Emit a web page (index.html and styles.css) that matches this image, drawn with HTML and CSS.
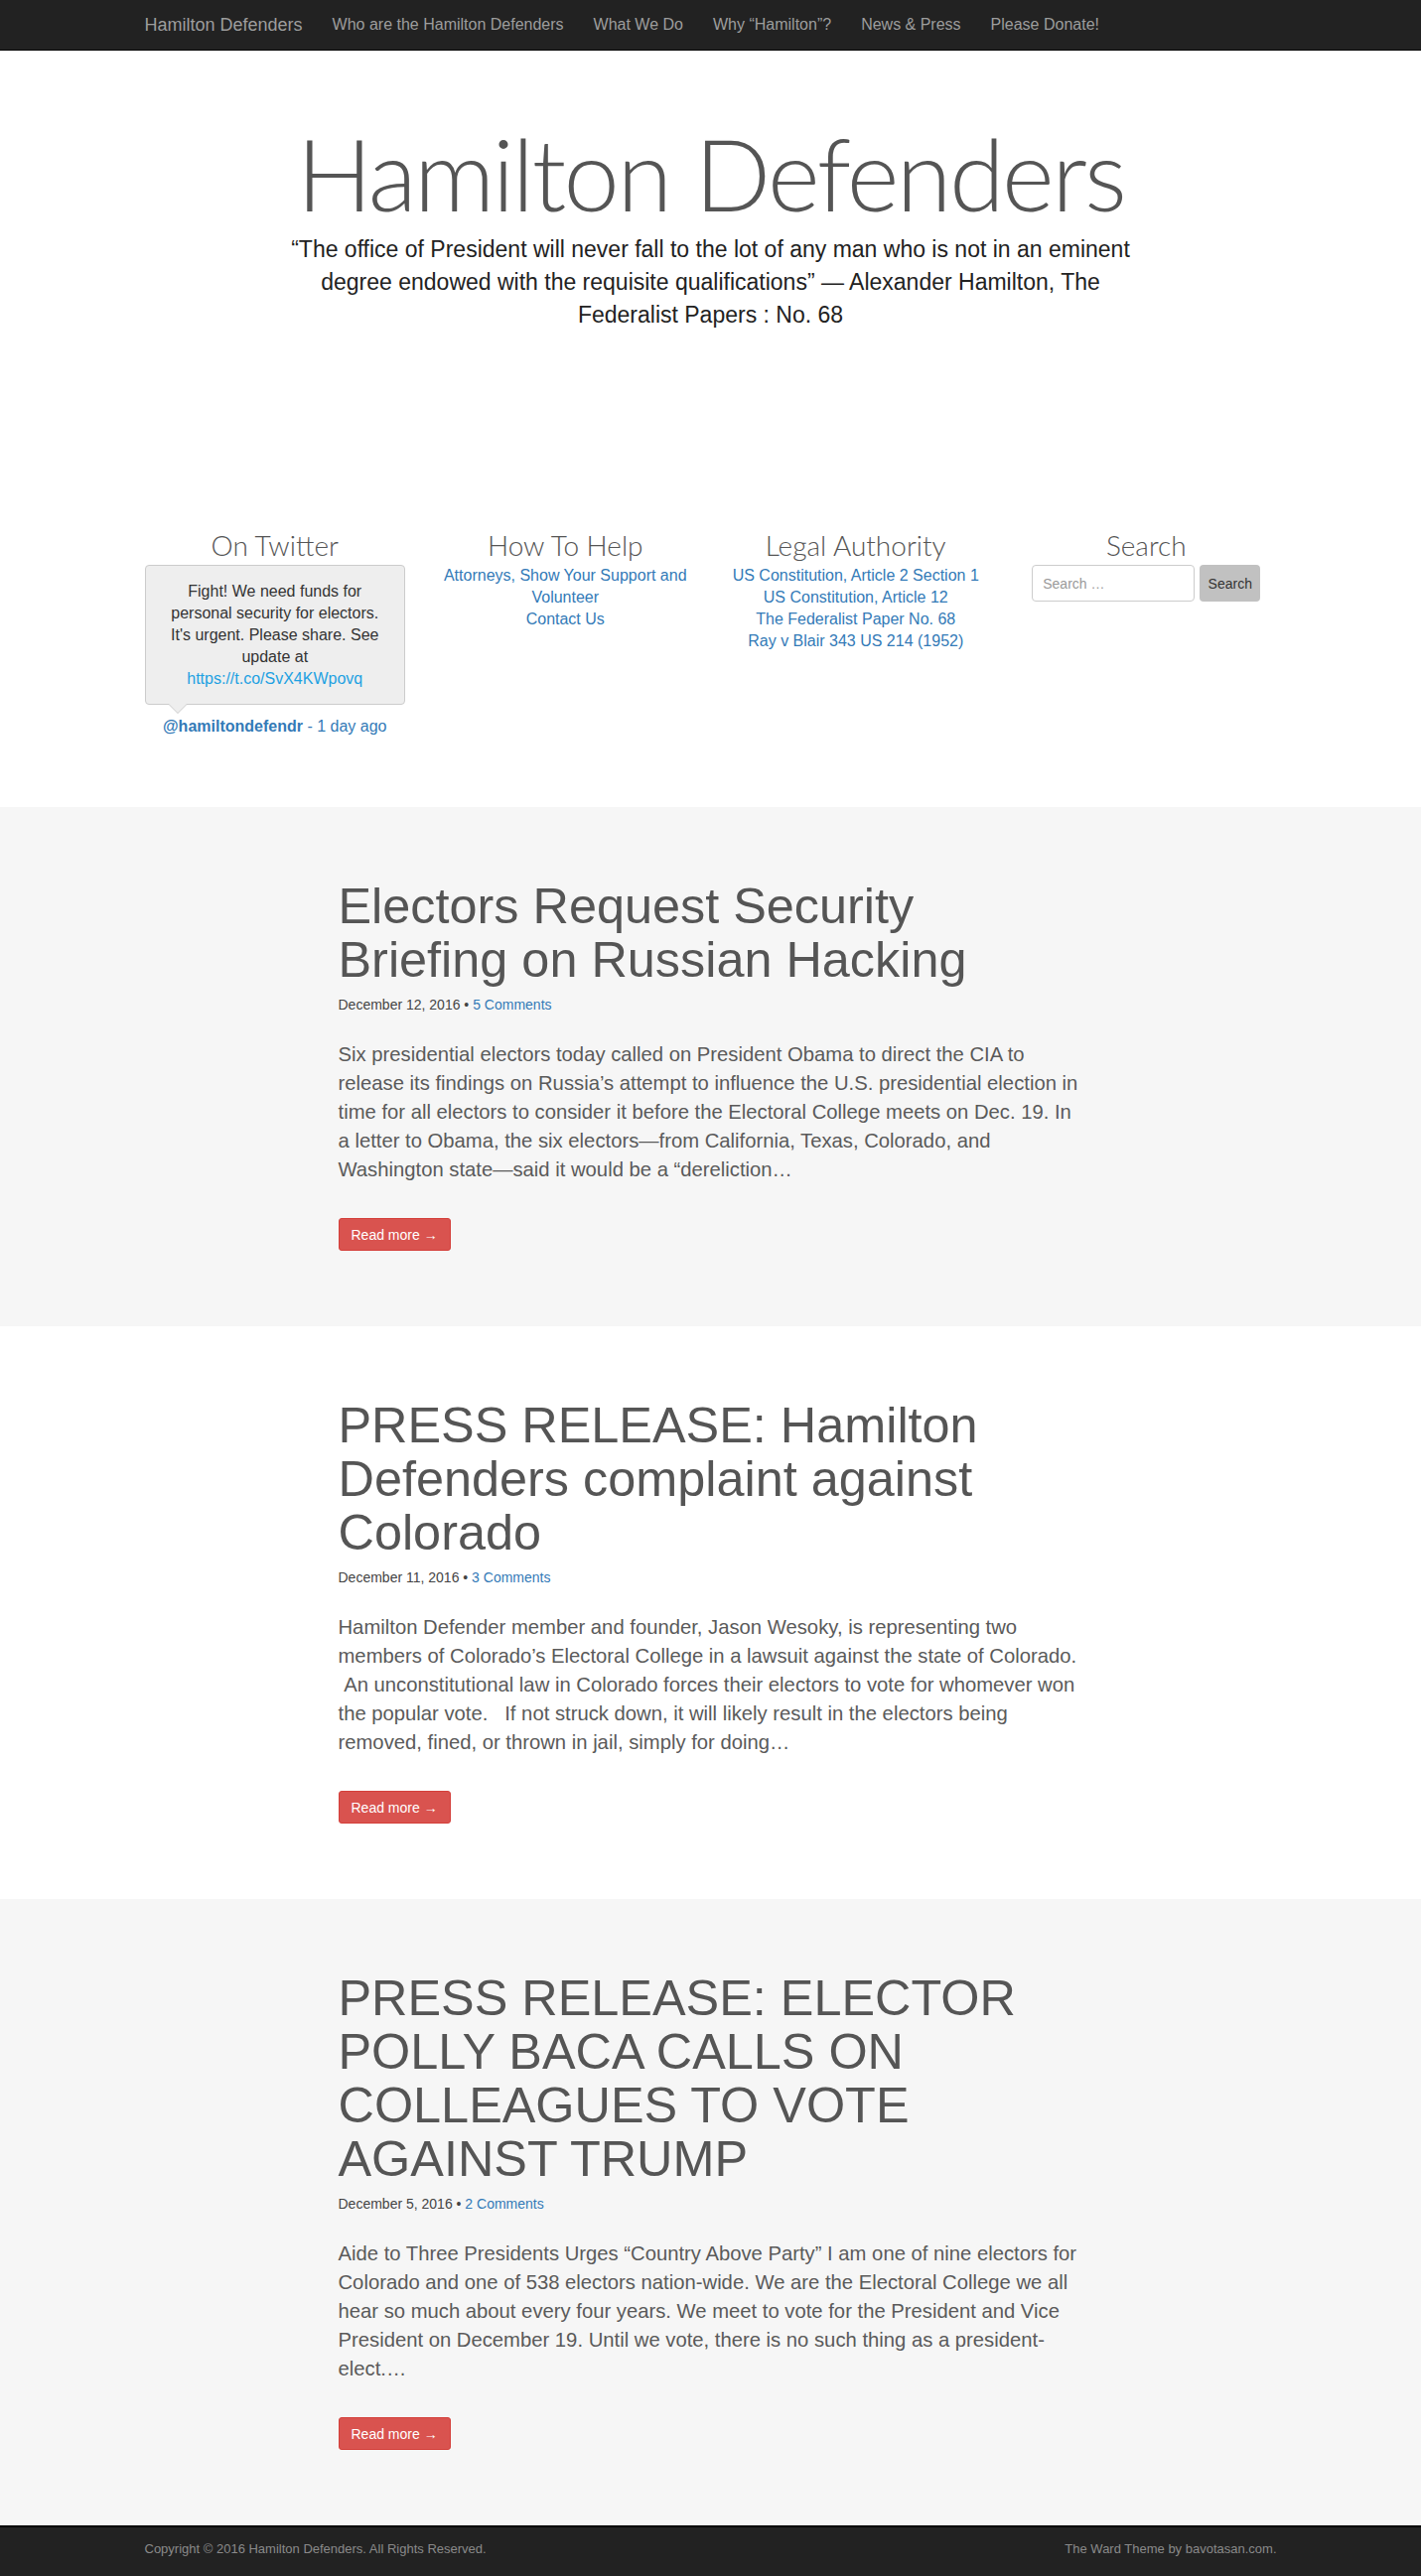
FILE: index.html
```html
<!DOCTYPE html>
<html lang="en">
<head>
    <meta charset="UTF-8">
    <meta name="viewport" content="width=device-width, initial-scale=1.0">
    <title>Hamilton Defenders</title>
    <link rel="stylesheet" href="styles.css">
</head>
<body>
    <nav class="navbar">
        <div class="container navbar_inner">
            <a class="brand" href="#">Hamilton Defenders</a>
            <ul class="nav_links">
                <li><a href="#">Who are the Hamilton Defenders</a></li>
                <li><a href="#">What We Do</a></li>
                <li><a href="#">Why “Hamilton”?</a></li>
                <li><a href="#">News &amp; Press</a></li>
                <li><a href="#">Please Donate!</a></li>
            </ul>
        </div>
    </nav>

    <header class="masthead">
        <div class="container">
            <h1 class="site_title">Hamilton Defenders</h1>
            <p class="site_quote">“The office of President will never fall to the lot of any man who is not in an eminent degree endowed with the requisite qualifications” — Alexander Hamilton, The Federalist Papers : No. 68</p>
        </div>
    </header>

    <section class="widgets">
        <div class="container widget_row">
            <div class="widget">
                <h3 class="widget_title">On Twitter</h3>
                <div class="tweet">
                    Fight! We need funds for personal security for electors. It's urgent. Please share. See update at <a class="tweet_link" href="#">https://t.co/SvX4KWpovq</a>
                </div>
                <div class="tweet_meta"><a class="handle" href="#">@hamiltondefendr</a> <a href="#">- 1 day ago</a></div>
            </div>
            <div class="widget">
                <h3 class="widget_title">How To Help</h3>
                <ul class="widget_links">
                    <li><a href="#">Attorneys, Show Your Support and Volunteer</a></li>
                    <li><a href="#">Contact Us</a></li>
                </ul>
            </div>
            <div class="widget">
                <h3 class="widget_title">Legal Authority</h3>
                <ul class="widget_links">
                    <li><a href="#">US Constitution, Article 2 Section 1</a></li>
                    <li><a href="#">US Constitution, Article 12</a></li>
                    <li><a href="#">The Federalist Paper No. 68</a></li>
                    <li><a href="#">Ray v Blair 343 US 214 (1952)</a></li>
                </ul>
            </div>
            <div class="widget">
                <h3 class="widget_title">Search</h3>
                <form class="search_form">
                    <input class="search_field" type="search" placeholder="Search …">
                    <button class="search_btn" type="button">Search</button>
                </form>
            </div>
        </div>
    </section>

    <main>
        <article class="post post_grey">
            <div class="post_inner">
                <h2 class="post_title">Electors Request Security Briefing on Russian Hacking</h2>
                <div class="post_meta">December 12, 2016 &bull; <a href="#">5 Comments</a></div>
                <p class="post_excerpt">Six presidential electors today called on President Obama to direct the CIA to release its findings on Russia’s attempt to influence the U.S. presidential election in time for all electors to consider it before the Electoral College meets on Dec. 19. In a letter to Obama, the six electors—from California, Texas, Colorado, and Washington state—said it would be a “dereliction…</p>
                <a class="btn_read" href="#">Read more &rarr;</a>
            </div>
        </article>

        <article class="post">
            <div class="post_inner">
                <h2 class="post_title">PRESS RELEASE: Hamilton Defenders complaint against Colorado</h2>
                <div class="post_meta">December 11, 2016 &bull; <a href="#">3 Comments</a></div>
                <p class="post_excerpt">Hamilton Defender member and founder, Jason Wesoky, is representing two members of Colorado’s Electoral College in a lawsuit against the state of Colorado. &nbsp;An unconstitutional law in Colorado forces their electors to vote for whomever won the popular vote. &nbsp; If not struck down, it will likely result in the electors being removed, fined, or thrown in jail, simply for doing…</p>
                <a class="btn_read" href="#">Read more &rarr;</a>
            </div>
        </article>

        <article class="post post_grey">
            <div class="post_inner">
                <h2 class="post_title">PRESS RELEASE: ELECTOR POLLY BACA CALLS ON COLLEAGUES TO VOTE AGAINST TRUMP</h2>
                <div class="post_meta">December 5, 2016 &bull; <a href="#">2 Comments</a></div>
                <p class="post_excerpt">Aide to Three Presidents Urges “Country Above Party” I am one of nine electors for Colorado and one of 538 electors nation-wide. We are the Electoral College we all hear so much about every four years. We meet to vote for the President and Vice President on December 19. Until we vote, there is no such thing as a president-elect.…</p>
                <a class="btn_read" href="#">Read more &rarr;</a>
            </div>
        </article>
    </main>

    <footer class="footer">
        <div class="container footer_inner">
            <span>Copyright © 2016 Hamilton Defenders. All Rights Reserved.</span>
            <span>The Ward Theme by bavotasan.com.</span>
        </div>
    </footer>
</body>
</html>
```

FILE: styles.css
```css
* {margin: 0; padding: 0; box-sizing: border-box;}

body
{
    font-family: "Liberation Sans", Arial, sans-serif;
    color: #333;
    background: #fff;
}

a
{
    color: #337ab7;
    text-decoration: none;
}

ul {list-style: none;}

.container
{
    width: 1170px;
    margin: 0 auto;
    padding: 0 15px;
}

/* navbar */
.navbar
{
    height: 51px;
    background: #222;
    border-bottom: 1px solid #080808;
}

.navbar_inner
{
    display: flex;
    align-items: center;
    height: 50px;
}

.brand
{
    font-size: 18px;
    color: #9d9d9d;
    padding-right: 15px;
}

.nav_links
{
    display: flex;
}

.nav_links a
{
    display: block;
    font-size: 16px;
    color: #9d9d9d;
    padding: 0 15px;
}

/* header */
.masthead
{
    padding-top: 68px;
    text-align: center;
}

.site_title
{
    font-family: Lato, "Open Sans", sans-serif;
    font-weight: 300;
    font-size: 101px;
    letter-spacing: -2.5px;
    line-height: 1.1;
    color: #555;
}

.site_quote
{
    width: 880px;
    margin: 5px auto 0;
    font-size: 23px;
    line-height: 33px;
    color: #222;
}

/* widgets */
.widgets
{
    padding: 199px 0 70px;
}

.widget_row
{
    display: grid;
    grid-template-columns: repeat(4, 1fr);
    column-gap: 30px;
    text-align: center;
    font-size: 16px;
    line-height: 22px;
}

.widget_title
{
    font-family: Lato, "Open Sans", sans-serif;
    font-weight: 300;
    font-size: 28px;
    line-height: 33px;
    color: #555;
    margin-bottom: 3px;
}

.tweet
{
    position: relative;
    background: #eee;
    border: 1px solid #ccc;
    border-radius: 4px;
    padding: 15px 15px 14px;
    color: #333;
}

/* little speech arrow under the tweet */
.tweet::after,
.tweet::before
{
    content: "";
    position: absolute;
    left: 22px;
    top: 100%;
    border: 10px solid transparent;
    border-bottom: 0;
}

.tweet::before
{
    border-top-color: #ccc;
}

.tweet::after
{
    margin-top: -1px;
    border-top-color: #eee;
}

.tweet_link
{
    color: #1da1e2;
}

.tweet_meta
{
    margin-top: 11px;
}

.handle {font-weight: bold;}

.search_form
{
    display: flex;
    justify-content: center;
    gap: 5px;
}

.search_field
{
    width: 164px;
    height: 37px;
    padding: 6px 10px;
    border: 1px solid #ccc;
    border-radius: 4px;
    font-family: "Liberation Sans", Arial, sans-serif;
    font-size: 14px;
    color: #555;
}

.search_field::placeholder {color: #999;}

.search_btn
{
    width: 61px;
    height: 37px;
    border: 0;
    border-radius: 4px;
    background: #c1c1c1;
    font-family: "Liberation Sans", Arial, sans-serif;
    font-size: 14px;
    color: #333;
}

/* posts */
.post
{
    padding: 73px 0 76px;
    background: #fff;
}

.post_grey {background: #f6f6f6;}

.post_inner
{
    width: 750px;
    margin: 0 auto;
}

.post_title
{
    font-weight: normal;
    font-size: 50.4px;
    line-height: 54px;
    color: #555;
}

.post_meta
{
    margin-top: 8px;
    font-size: 14px;
    line-height: 20px;
    color: #444;
}

.post_excerpt
{
    width: 752px;
    margin-top: 26px;
    font-size: 20.25px;
    line-height: 29px;
    color: #5a5a5a;
}

.btn_read
{
    display: inline-block;
    margin-top: 34px;
    padding: 6px 12px 5px;
    font-size: 14px;
    line-height: 20px;
    color: #fff;
    background: #d9534f;
    border: 1px solid #d43f3a;
    border-radius: 3px;
}

/* footer */
.footer
{
    background: #222;
    border-top: 2px solid #000;
    padding: 12px 0 30px;
}

.footer_inner
{
    display: flex;
    justify-content: space-between;
    font-size: 13px;
    line-height: 20px;
    color: #8a8a8a;
}
```
